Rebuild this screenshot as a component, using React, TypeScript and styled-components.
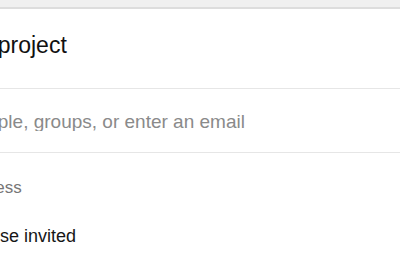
import React from "react";
import styled, { createGlobalStyle } from "styled-components";

const GlobalStyle = createGlobalStyle`
  html, body {
    margin: 0;
    padding: 0;
    background: #ffffff;
    overflow: hidden;
  }
  body {
    font-family: "Liberation Sans", Arial, sans-serif;
  }
`;

const Page = styled.div`
  width: 400px;
  height: 265px;
  overflow: hidden;
  background: #ffffff;
`;

const Backdrop = styled.div`
  height: 7px;
  background: #f0f0f0;
  border-bottom: 2px solid #dddddd;
`;

const Dialog = styled.div`
  display: flex;
  flex-direction: column;
  margin-left: -67px;
  background: #ffffff;
`;

const Header = styled.div<{ $shift: number }>`
  padding: 25px 0 31px;
  margin-left: ${(p) => p.$shift}px;
  border-bottom: 1px solid #e6e6e6;
`;

const Title = styled.h2`
  margin: 0;
  font-size: 23px;
  line-height: 23px;
  font-weight: 400;
  color: #111111;
  white-space: nowrap;
`;

const InviteRow = styled.div<{ $shift: number }>`
  display: flex;
  align-items: center;
  padding: 23px 0 21px;
  margin-left: ${(p) => p.$shift}px;
  border-bottom: 1px solid #e6e6e6;
`;

const InviteInput = styled.input`
  flex: 1;
  min-width: 0;
  border: none;
  outline: none;
  padding: 0;
  margin: 0;
  height: 19px;
  font-family: "Liberation Sans", Arial, sans-serif;
  font-size: 19px;
  line-height: 19px;
  color: #111111;
  background: transparent;
  &::placeholder {
    color: #8a8a8a;
  }
`;

const Section = styled.div`
  display: flex;
  flex-direction: column;
  padding-top: 26px;
  gap: 31px;
`;

const SectionLabel = styled.div`
  font-size: 17px;
  line-height: 17px;
  color: #767676;
  white-space: nowrap;
`;

const Option = styled.div`
  font-size: 18px;
  line-height: 18px;
  color: #161616;
  white-space: nowrap;
`;

export default function App() {
  return (
    <>
      <GlobalStyle />
      <Page>
        <Backdrop />
        <Dialog>
          <Header $shift={-3}>
            <Title>Share project</Title>
          </Header>
          <InviteRow $shift={-6}>
            <InviteInput placeholder="Add people, groups, or enter an email" />
          </InviteRow>
          <Section>
            <SectionLabel>Link access</SectionLabel>
            <Option>Only those invited</Option>
          </Section>
        </Dialog>
      </Page>
    </>
  );
}
